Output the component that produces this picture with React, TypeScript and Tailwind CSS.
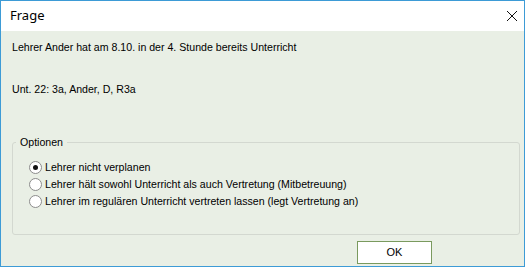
import { useState } from "react";

const options = [
  "Lehrer nicht verplanen",
  "Lehrer hält sowohl Unterricht als auch Vertretung (Mitbetreuung)",
  "Lehrer im regulären Unterricht vertreten lassen (legt Vertretung an)",
];

const Radio = ({ checked }: { checked: boolean }) => (
  <span className="w-[13px] h-[13px] rounded-full border border-[#8c8c8c] bg-white flex items-center justify-center shrink-0">
    {checked && <span className="w-[5px] h-[5px] rounded-full bg-[#111]" />}
  </span>
);

export default function App() {
  const [selected, setSelected] = useState(0);

  return (
    <div className="w-[526px] h-[268px] bg-white" style={{ fontFamily: '"Liberation Sans", Arial, sans-serif' }}>
      <div className="w-[525px] h-[267px] border border-[#3d9bd6] flex flex-col">
        {/* Title bar */}
        <div className="h-[30px] bg-white flex items-center justify-between pl-[9px] pr-[6px] shrink-0">
          <span className="text-[13px] text-black" style={{ fontFamily: '"Noto Sans", sans-serif' }}>
            Frage
          </span>
          <svg width="12" height="12" viewBox="0 0 12 12">
            <path d="M1 1 L11 11 M11 1 L1 11" stroke="#111" strokeWidth="1" />
          </svg>
        </div>

        {/* Body */}
        <div className="flex-1 bg-[#e9efe5] px-[11px] text-[10.6px] text-black flex flex-col">
          <p className="mt-[10px] leading-[13px]">Lehrer Ander hat am 8.10. in der 4. Stunde bereits Unterricht</p>
          <p className="mt-[29px] leading-[13px]">Unt. 22: 3a, Ander, D, R3a</p>

          <fieldset className="mt-[40px] h-[99px] w-[508px] border border-[#d3d8d0] rounded-[3px] p-0 m-0">
            <legend className="ml-[3px] px-[4px] leading-[13px]">Optionen</legend>
            <div className="flex flex-col gap-[4px] mt-[12px] pl-[16px]">
              {options.map((o, i) => (
                <label key={o} className="flex items-center gap-[3px] h-[13px] leading-[13px] cursor-default" onClick={() => setSelected(i)}>
                  <Radio checked={selected === i} />
                  <span>{o}</span>
                </label>
              ))}
            </div>
          </fieldset>

          <div className="flex justify-end mt-[6px] pr-[81px]">
            <button className="w-[75px] h-[23px] bg-white border border-[#7a9a5e] text-[11px] text-black flex items-center justify-center">
              OK
            </button>
          </div>
        </div>
      </div>
    </div>
  );
}
